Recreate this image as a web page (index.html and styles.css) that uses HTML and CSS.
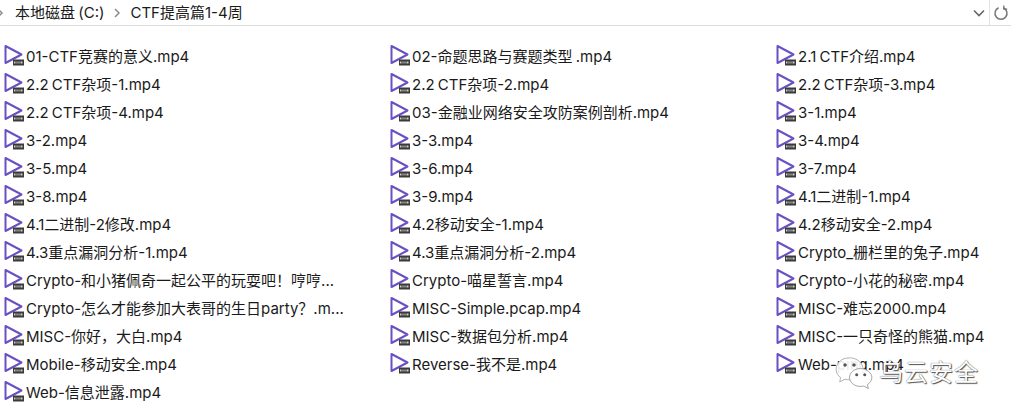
FILE: index.html
```html
<!DOCTYPE html>
<html lang="zh-CN">
<head>
  <meta charset="UTF-8">
  <title>CTF提高篇1-4周</title>
  <link rel="stylesheet" href="styles.css">
</head>
<body>
  <svg class="defs" width="0" height="0">
    <symbol id="video" viewBox="0 0 22 22">
      <path d="M2.500 2 L2.500 19 L18.500 10.500 Z" fill="#fff" stroke="#6a50c4" stroke-width="2" stroke-linejoin="round"/>
      <rect x="10" y="15.500" width="11" height="6" fill="#3a3a3a"/>
      <path d="M11 18.500h1.500M13.500 18.500h1M15.500 18.500h1M17.500 18.500h2" stroke="#ccc" stroke-width="2"/>
    </symbol>
  </svg>

  <div class="bar">
    <div class="crumbs">
      <svg class="sep first" width="6" height="10" viewBox="0 0 6 10"><path d="M0 1l4 4-4 4" fill="none" stroke="#8a8a8a" stroke-width="1.500"/></svg>
      <span class="crumb">本地磁盘 (C:)</span>
      <svg class="sep" width="6" height="10" viewBox="0 0 6 10"><path d="M1 1l4 4-4 4" fill="none" stroke="#8a8a8a" stroke-width="1.500"/></svg>
      <span class="crumb">CTF提高篇1-4周</span>
    </div>
    <div class="tools">
      <svg width="12" height="8" viewBox="0 0 12 8"><path d="M1 1.500l5 5 5-5" fill="none" stroke="#666" stroke-width="1.600"/></svg>
      <span class="divider"></span>
      <svg width="16" height="16" viewBox="0 0 16 16"><path d="M5.600 2.800a6 6 0 1 0 4.800 0" fill="none" stroke="#777" stroke-width="1.500"/><path d="M10.800 0.500v3.600h3.400" fill="none" stroke="#777" stroke-width="1.300"/></svg>
    </div>
  </div>

  <div class="files">
    <div class="file"><svg class="ico"><use href="#video"/></svg><span>01-CTF竞赛的意义.mp4</span></div>
    <div class="file"><svg class="ico"><use href="#video"/></svg><span>02-命题思路与赛题类型 .mp4</span></div>
    <div class="file"><svg class="ico"><use href="#video"/></svg><span>2.1 CTF介绍.mp4</span></div>
    <div class="file"><svg class="ico"><use href="#video"/></svg><span>2.2 CTF杂项-1.mp4</span></div>
    <div class="file"><svg class="ico"><use href="#video"/></svg><span>2.2 CTF杂项-2.mp4</span></div>
    <div class="file"><svg class="ico"><use href="#video"/></svg><span>2.2 CTF杂项-3.mp4</span></div>
    <div class="file"><svg class="ico"><use href="#video"/></svg><span>2.2 CTF杂项-4.mp4</span></div>
    <div class="file"><svg class="ico"><use href="#video"/></svg><span>03-金融业网络安全攻防案例剖析.mp4</span></div>
    <div class="file"><svg class="ico"><use href="#video"/></svg><span>3-1.mp4</span></div>
    <div class="file"><svg class="ico"><use href="#video"/></svg><span>3-2.mp4</span></div>
    <div class="file"><svg class="ico"><use href="#video"/></svg><span>3-3.mp4</span></div>
    <div class="file"><svg class="ico"><use href="#video"/></svg><span>3-4.mp4</span></div>
    <div class="file"><svg class="ico"><use href="#video"/></svg><span>3-5.mp4</span></div>
    <div class="file"><svg class="ico"><use href="#video"/></svg><span>3-6.mp4</span></div>
    <div class="file"><svg class="ico"><use href="#video"/></svg><span>3-7.mp4</span></div>
    <div class="file"><svg class="ico"><use href="#video"/></svg><span>3-8.mp4</span></div>
    <div class="file"><svg class="ico"><use href="#video"/></svg><span>3-9.mp4</span></div>
    <div class="file"><svg class="ico"><use href="#video"/></svg><span>4.1二进制-1.mp4</span></div>
    <div class="file"><svg class="ico"><use href="#video"/></svg><span>4.1二进制-2修改.mp4</span></div>
    <div class="file"><svg class="ico"><use href="#video"/></svg><span>4.2移动安全-1.mp4</span></div>
    <div class="file"><svg class="ico"><use href="#video"/></svg><span>4.2移动安全-2.mp4</span></div>
    <div class="file"><svg class="ico"><use href="#video"/></svg><span>4.3重点漏洞分析-1.mp4</span></div>
    <div class="file"><svg class="ico"><use href="#video"/></svg><span>4.3重点漏洞分析-2.mp4</span></div>
    <div class="file"><svg class="ico"><use href="#video"/></svg><span>Crypto_栅栏里的兔子.mp4</span></div>
    <div class="file"><svg class="ico"><use href="#video"/></svg><span>Crypto-和小猪佩奇一起公平的玩耍吧！哼哼...</span></div>
    <div class="file"><svg class="ico"><use href="#video"/></svg><span>Crypto-喵星誓言.mp4</span></div>
    <div class="file"><svg class="ico"><use href="#video"/></svg><span>Crypto-小花的秘密.mp4</span></div>
    <div class="file"><svg class="ico"><use href="#video"/></svg><span>Crypto-怎么才能参加大表哥的生日party？.m...</span></div>
    <div class="file"><svg class="ico"><use href="#video"/></svg><span>MISC-Simple.pcap.mp4</span></div>
    <div class="file"><svg class="ico"><use href="#video"/></svg><span>MISC-难忘2000.mp4</span></div>
    <div class="file"><svg class="ico"><use href="#video"/></svg><span>MISC-你好，大白.mp4</span></div>
    <div class="file"><svg class="ico"><use href="#video"/></svg><span>MISC-数据包分析.mp4</span></div>
    <div class="file"><svg class="ico"><use href="#video"/></svg><span>MISC-一只奇怪的熊猫.mp4</span></div>
    <div class="file"><svg class="ico"><use href="#video"/></svg><span>Mobile-移动安全.mp4</span></div>
    <div class="file"><svg class="ico"><use href="#video"/></svg><span>Reverse-我不是.mp4</span></div>
    <div class="file"><svg class="ico"><use href="#video"/></svg><span>Web-ping.mp4</span></div>
    <div class="file"><svg class="ico"><use href="#video"/></svg><span>Web-信息泄露.mp4</span></div>
  </div>

  <div class="watermark">
    <svg width="40" height="34" viewBox="0 0 44 38">
      <path d="M17 2C8 2 2 8 2 15c0 4 2 7 5 9l-1 5 6-3c2 .5 3 .5 5 .5 9 0 15-6 15-12S26 2 17 2z" fill="rgba(255,255,255,.9)" stroke="#aaa" stroke-width="1"/>
      <path d="M29 14c-7 0-12 5-12 10s5 10 12 10c1.500 0 3 0 4-.5l5 3-1-4.500c3-2 5-5 5-8 0-5-6-10-13-10z" fill="rgba(255,255,255,.95)" stroke="#999" stroke-width="1"/>
      <circle cx="12" cy="10" r="2" fill="#555"/>
      <circle cx="22" cy="10" r="2" fill="#555"/>
      <circle cx="25" cy="21" r="1.700" fill="#555"/>
      <circle cx="34" cy="21" r="1.700" fill="#555"/>
    </svg>
    <span class="mark-text">乌云安全</span>
  </div>
</body>
</html>
```

FILE: styles.css
```css
html, body {
  margin: 0;
  height: 100%;
  overflow: hidden;
}

body {
  position: relative;
  background: #fff;
  color: #1a1a1a;
  font-family: "Inter", "Noto Sans CJK SC", sans-serif;
  font-size: 15px;
  word-spacing: -1px;
}

.defs {
  display: block;
  height: 0;
}

.bar {
  display: flex;
  justify-content: space-between;
  align-items: center;
  height: 25px;
  border-bottom: 1px solid #dcdcdc;
}

.crumbs {
  display: flex;
  align-items: center;
  height: 24px;
}

.crumb {
  line-height: 20px;
}

.sep {
  margin: 0 10px;
}

.sep.first {
  margin: 0 11px 0 -2px;
}

.tools {
  display: flex;
  align-items: center;
  height: 25px;
  padding-right: 2px;
}

.tools svg:first-child {
  margin-right: 4px;
}

.divider {
  width: 1px;
  height: 25px;
  margin-right: 3px;
  background: #e2e2e2;
}

.files {
  display: grid;
  grid-template-columns: 386px 386px 1fr;
  grid-auto-rows: 28px;
  padding: 15px 0 0 3px;
}

.file {
  display: flex;
  align-items: center;
  gap: 1px;
  min-width: 0;
  white-space: nowrap;
}

.file span {
  padding-top: 4px;
  line-height: 20px;
}

.ico {
  width: 22px;
  height: 22px;
  flex: none;
}

.watermark {
  position: absolute;
  left: 834px;
  top: 356px;
  display: flex;
  align-items: center;
  gap: 5px;
}

.mark-text {
  color: #fff;
  font-size: 24px;
  letter-spacing: 1px;
  line-height: 34px;
  text-shadow: 0 0 1px #333, 1px 1px 1px #555;
}
```
